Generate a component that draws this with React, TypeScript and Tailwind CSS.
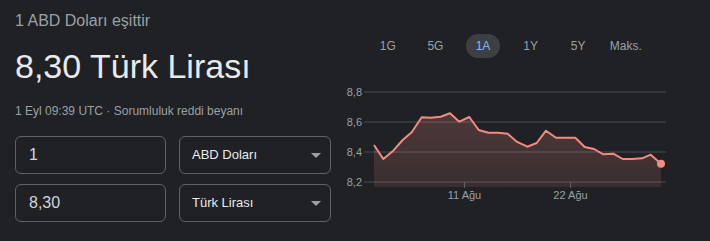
import React from 'react';

const TABS = ['1G', '5G', '1A', '1Y', '5Y', 'Maks.'];

// price points for the 1A view, read off the chart (pixel coords)
const POINTS: [number, number][] = [
  [374, 145], [383.3, 159], [393.3, 150.7], [402.7, 140], [411.7, 132.3], [421.7, 117.3],
  [430.7, 117.7], [440.7, 116.7], [450, 113.3], [459.3, 121.7], [469.3, 117], [478.7, 130],
  [488.3, 132.7], [498.3, 132.7], [507.7, 133.7], [516.7, 141.7], [527.3, 146.7], [536.7, 143],
  [546, 130.7], [556, 137.7], [565.3, 137.7], [575.3, 137.7], [584.7, 147], [594, 149],
  [603.3, 154.3], [613.3, 153.7], [622.7, 159], [632, 159], [642, 158.3], [650.7, 154.7],
  [661, 163.7],
];

const GRID = [
  { y: 92, label: '8,8' },
  { y: 122, label: '8,6' },
  { y: 152, label: '8,4' },
  { y: 182, label: '8,2' },
];

const CaretDown = () => (
  <svg width="10" height="5" viewBox="0 0 10 5" className="shrink-0">
    <path d="M0 0h10L5 5z" fill="#9aa0a6" />
  </svg>
);

const AmountInput: React.FC<{ value: string }> = ({ value }) => (
  <div className="w-[151px] h-[38px] rounded-[6px] border border-[#5f6368] flex items-center px-[13px] text-[16px] text-[#d2d6db]">
    {value}
  </div>
);

const CurrencySelect: React.FC<{ label: string }> = ({ label }) => (
  <div className="w-[152px] h-[38px] rounded-[6px] border border-[#5f6368] flex items-center justify-between pl-[12px] pr-[9px] text-[13px] text-[#e8eaed]">
    <span>{label}</span>
    <CaretDown />
  </div>
);

const Chart = () => {
  const line = POINTS.map(([x, y], i) => `${i ? 'L' : 'M'}${x} ${y}`).join(' ');
  const area = `${line} L661 187 L374 187 Z`;
  return (
    <svg width="370" height="125" viewBox="340 80 370 125" className="block">
      <defs>
        <linearGradient id="areaFill" x1="0" y1="0" x2="0" y2="1">
          <stop offset="0%" stopColor="#f28b82" stopOpacity="0.22" />
          <stop offset="100%" stopColor="#f28b82" stopOpacity="0.12" />
        </linearGradient>
      </defs>
      {GRID.map((g) => (
        <g key={g.label}>
          <line x1="364" x2="666" y1={g.y} y2={g.y} stroke="#3c4043" strokeWidth="1.5" />
          <text x="362" y={g.y + 4} textAnchor="end" fontSize="11" fill="#9aa0a6" fontFamily="'Liberation Sans', Arial, sans-serif">
            {g.label}
          </text>
        </g>
      ))}
      <path d={area} fill="url(#areaFill)" />
      <path d={line} fill="none" stroke="#f28b82" strokeWidth="2" strokeLinejoin="round" />
      <circle cx="661" cy="163.7" r="4" fill="#f28b82" />
      {[
        { x: 464.5, label: '11 Ağu' },
        { x: 570.5, label: '22 Ağu' },
      ].map((t) => (
        <g key={t.label}>
          <line x1={t.x} x2={t.x} y1="182" y2="188" stroke="#5f6368" strokeWidth="1" />
          <text x={t.x} y="199" textAnchor="middle" fontSize="11" fill="#9aa0a6" fontFamily="'Liberation Sans', Arial, sans-serif">
            {t.label}
          </text>
        </g>
      ))}
    </svg>
  );
};

export default function App() {
  return (
    <div className="w-[710px] h-[241px] bg-[#202124] flex font-['Liberation_Sans',Arial,sans-serif] overflow-hidden">
      {/* converter */}
      <div className="w-[340px] shrink-0 pl-[15px] pt-[11px] flex flex-col">
        <div className="text-[16px] leading-[20px] text-[#9aa0a6]">1 ABD Doları eşittir</div>
        <div className="mt-[15px] text-[34px] leading-[40px] text-[#e8eaed]">8,30 Türk Lirası</div>
        <div className="mt-[17px] text-[12px] leading-[16px] text-[#9aa0a6]">
          1 Eyl 09:39 UTC · Sorumluluk reddi beyanı
        </div>
        <div className="mt-[17px] flex gap-[13px]">
          <AmountInput value="1" />
          <CurrencySelect label="ABD Doları" />
        </div>
        <div className="mt-[10px] flex gap-[13px]">
          <AmountInput value="8,30" />
          <CurrencySelect label="Türk Lirası" />
        </div>
      </div>

      {/* chart */}
      <div className="flex-1 flex flex-col">
        <div className="mt-[34px] pl-[24px] flex">
          {TABS.map((t) => (
            <div key={t} className="w-[47.6px] flex justify-center">
              <button
                className={
                  t === '1A'
                    ? 'h-6 px-[10px] rounded-full bg-[#3c4043] text-[12px] text-[#8ab4f8]'
                    : 'h-6 px-[10px] rounded-full text-[12px] text-[#9aa0a6]'
                }
              >
                {t}
              </button>
            </div>
          ))}
        </div>
        <div className="mt-[22px]">
          <Chart />
        </div>
      </div>
    </div>
  );
}
